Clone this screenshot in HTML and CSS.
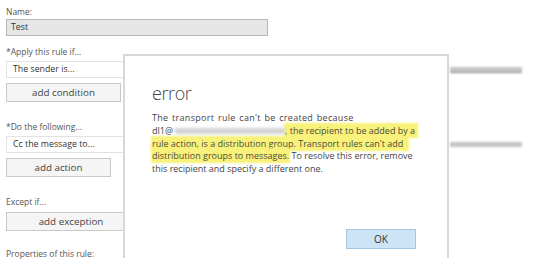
FILE: index.html
```html
<html>

<head>
    <meta charset="utf-8">
    <title>New rule</title>
    <link rel="stylesheet" href="styles.css">
</head>

<body>
    <div class="form">
        <div class="label">Name:</div>
        <div class="textbox">Test</div>

        <div class="label gap">*Apply this rule if...</div>
        <div class="row">
            <div class="select">The sender is...</div>
            <span class="addr underline"></span>
        </div>
        <div class="button cond">add condition</div>

        <div class="label gap-lg">*Do the following...</div>
        <div class="row">
            <div class="select">Cc the message to...</div>
            <span class="addr"></span>
        </div>
        <div class="button act">add action</div>

        <div class="label gap-lg except">Except if...</div>
        <div class="button exc">add exception</div>

        <div class="label props">Properties of this rule:</div>
    </div>

    <div class="dialog">
        <h1 class="title">error</h1>
        <p class="message">
            <span class="first">The transport rule can't be created because</span><br>
            dl1@<span class="blurred"></span><mark>, the recipient to be added by a&nbsp;</mark><br>
            <mark>rule action, is a distribution group. Transport rules can't add&nbsp;&nbsp;</mark><br>
            <mark>distribution groups to messages.</mark> To resolve this error, remove<br>
            this recipient and specify a different one.
        </p>
        <div class="footer">
            <div class="ok">OK</div>
        </div>
    </div>
</body>

</html>
```

FILE: styles.css
```css
body {
    margin: 0;
    background: #fff;
    color: #444;
    font-family: "Open Sans", sans-serif;
}

.form {
    padding: 5px 0 0 6px;
}

.label {
    font-size: 8.5px;
    line-height: 14px;
    color: #555;
}

.gap {
    margin-top: 9px;
}

.gap-lg {
    margin-top: 18px;
}

.except {
    margin-bottom: 3px;
}

.props {
    margin-top: 16px;
}

.textbox {
    box-sizing: border-box;
    width: 262px;
    height: 17px;
    padding: 0 4px;
    background: #e6e6e6;
    border: 1px solid #b9b9b9;
    font-size: 8.8px;
    line-height: 15px;
    color: #333;
}

.row {
    display: flex;
    align-items: center;
    margin-top: 2px;
}

.select {
    box-sizing: border-box;
    width: 262px;
    height: 17px;
    padding: 0 6px;
    border: 1px solid #e2e2e2;
    background: #fff;
    font-size: 8.8px;
    line-height: 15px;
    color: #333;
}

.addr {
    display: inline-block;
    width: 72px;
    height: 5px;
    margin-left: 182px;
    background: #c4c4c4;
    filter: blur(1.2px);
}

.underline {
    border-bottom: 1px solid #8a8a8a;
}

.button {
    box-sizing: border-box;
    height: 19px;
    margin-top: 5px;
    border: 1px solid #c9c9c9;
    background: #f5f5f5;
    text-align: center;
    font-size: 9.8px;
    line-height: 17px;
    color: #444;
}

.cond {
    width: 115px;
}

.act {
    width: 105px;
}

.exc {
    width: 130px;
    margin-top: 0;
}

.dialog {
    position: absolute;
    left: 123px;
    top: 54px;
    box-sizing: border-box;
    width: 326px;
    height: 204px;
    padding: 24px 31px 9px 27px;
    background: #fff;
    border: 2px solid #d8d8d8;
    border-bottom: none;
    display: flex;
    flex-direction: column;
}

.title {
    margin: 0;
    font-size: 18px;
    font-weight: 300;
    line-height: 26px;
    letter-spacing: -0.4px;
    color: #444;
}

.message {
    margin: 6px 0 0 0;
    font-size: 9px;
    line-height: 12.75px;
    color: #444;
    white-space: nowrap;
}

.first {
    letter-spacing: 0.3px;
    word-spacing: 1px;
}

.blurred {
    display: inline-block;
    width: 110px;
    height: 6px;
    margin-left: 2px;
    background: #d2d2d2;
    filter: blur(1.5px);
    vertical-align: middle;
}

mark {
    background: #f9f27a;
    color: #4a4a3a;
    box-shadow: 0 0 2px 1px #f9f27a;
}

.footer {
    margin-top: auto;
    display: flex;
    justify-content: flex-end;
}

.ok {
    box-sizing: border-box;
    width: 70px;
    height: 20px;
    background: #cde4f6;
    border: 1px solid #a6c6e0;
    text-align: center;
    font-size: 10px;
    line-height: 18px;
    color: #333;
}
```
